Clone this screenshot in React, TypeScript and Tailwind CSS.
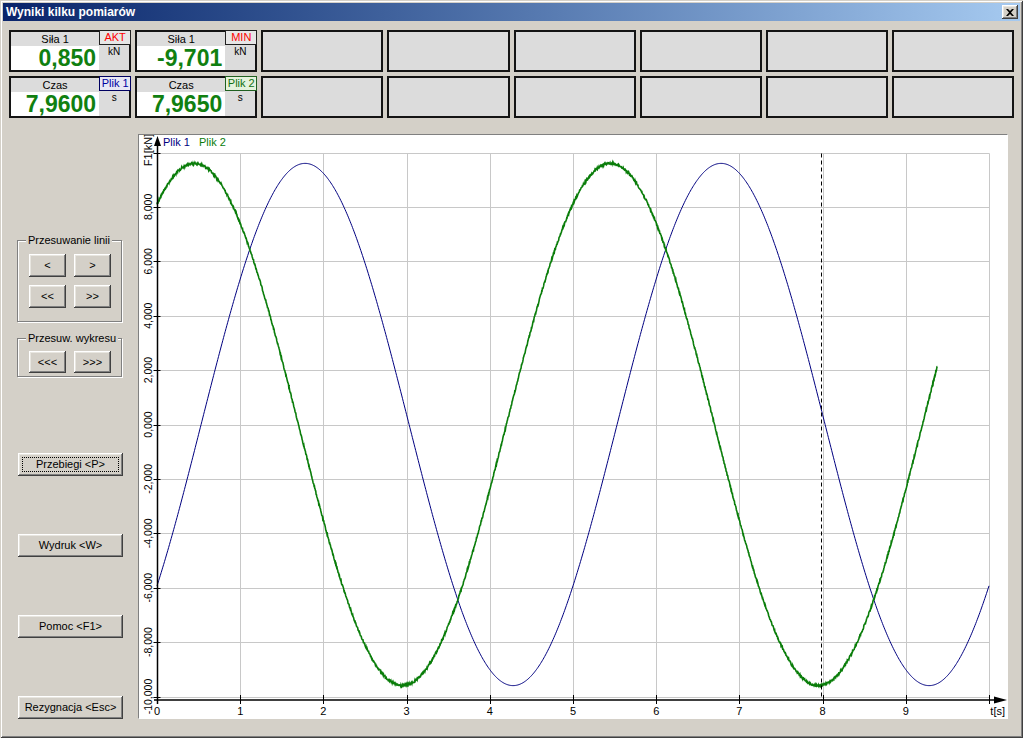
import React from "react";

type Cell = {
    label: string;
    tag: string;
    tagClass: string;
    value: string;
    unit: string;
} | null;

const rows: Cell[][] = [
    [
        { label: "Siła 1", tag: "AKT", tagClass: "text-[#ff0000] bg-[#e6e6e6] border-[#202020]", value: "0,850", unit: "kN" },
        { label: "Siła 1", tag: "MIN", tagClass: "text-[#ff0000] bg-[#e6e6e6] border-[#202020]", value: "-9,701", unit: "kN" },
        null, null, null, null, null, null,
    ],
    [
        { label: "Czas", tag: "Plik 1", tagClass: "text-[#0000a0] bg-[#e8e8f4] border-[#000060]", value: "7,9600", unit: "s" },
        { label: "Czas", tag: "Plik 2", tagClass: "text-[#107010] bg-[#e4f2dc] border-[#206020]", value: "7,9650", unit: "s" },
        null, null, null, null, null, null,
    ],
];

const btn3d =
    "bg-[#d4d0c8] shadow-[inset_-1px_-1px_#404040,inset_1px_1px_#ffffff,inset_-2px_-2px_#808080,inset_2px_2px_#e8e6e0]";

const Btn = ({ children, className = "" }: { children: React.ReactNode; className?: string }) => (
    <button className={`${btn3d} flex items-center justify-center text-[11px] text-black ${className}`}>
        {children}
    </button>
);

// 👉 focused button: dotted focus rect inside
const FocusBtn = ({ children, className = "" }: { children: React.ReactNode; className?: string }) => (
    <button className={`${btn3d} p-[4px] ${className}`}>
        <span className="flex h-full w-full items-center justify-center border border-dotted border-black text-[11px] text-black">
            {children}
        </span>
    </button>
);

const GroupBox = ({ title, className = "", children }: { title: string; className?: string; children: React.ReactNode }) => (
    <div className={`relative border border-[#808080] shadow-[inset_1px_1px_#ffffff,1px_1px_#ffffff] ${className}`}>
        <span className="absolute -top-[8px] left-[8px] bg-[#d4d0c8] px-[2px] text-[11px] leading-[14px] text-black">
            {title}
        </span>
        {children}
    </div>
);

const Panel = ({ cell }: { cell: Cell }) => {
    if (!cell) {
        return <div className="h-[42px] border-2 border-[#141414] bg-[#dcdcdc]" />;
    }
    return (
        <div className="flex h-[42px] border-2 border-[#141414] bg-[#dcdcdc]">
            <div className="flex flex-1 flex-col">
                <div className="flex h-[14px] items-center justify-center text-[11px] leading-none text-black">
                    {cell.label}
                </div>
                <div className="flex flex-1 items-center justify-end bg-white pr-[3px] text-[23px] font-bold leading-none text-[#108010]">
                    {cell.value}
                </div>
            </div>
            <div className="flex w-[30px] flex-col">
                <div className={`flex h-[15px] items-center justify-center border text-[11px] leading-none ${cell.tagClass} -mt-[2px] -mr-[2px] w-[32px]`}>
                    {cell.tag}
                </div>
                <div className="pt-[2px] text-center text-[10px] leading-none text-black">{cell.unit}</div>
            </div>
        </div>
    );
};

// chart geometry (px inside the chart box)
const X = (t: number) => 18 + t * 83.2;
const Y = (v: number) => 289.5 - v * 27.2;
// snapped to pixel centres for crisp 1px lines
const XS = (t: number) => Math.round(X(t)) + 0.5;
const YS = (v: number) => Math.round(Y(v)) + 0.5;

const curve = (phase: number, tEnd: number, noise: number) => {
    let seed = 12345;
    const rnd = () => {
        seed = (seed * 1103515245 + 12345) % 2147483648;
        return seed / 2147483648;
    };
    const pts: string[] = [];
    const step = noise > 0 ? 0.004 : 0.01;
    for (let t = 0; t <= tEnd + 1e-9; t += step) {
        const v = 9.6 * Math.cos((2 * Math.PI * (t - phase)) / 5);
        const n = noise > 0 ? (rnd() - 0.5) * noise : 0;
        pts.push(`${X(t).toFixed(2)},${(Y(v) + n).toFixed(2)}`);
    }
    return "M" + pts.join(" L");
};

const yTicks = [10, 8, 6, 4, 2, 0, -2, -4, -6, -8, -10];
const yLabel = (v: number) =>
    v === 0 ? "0,000" : `${v < 0 ? "-" : ""}${Math.abs(v)},000`;

const Chart = () => {
    const navy = curve(1.78, 10, 0);
    const green = curve(0.45, 9.38, 2.2);
    const ax = XS(0);
    return (
        <div className="h-[585px] w-[870px] border border-t-[#808080] border-l-[#808080] border-r-white border-b-white bg-white">
            <svg width={868} height={583} className="block" style={{ fontFamily: '"Liberation Sans", Arial, sans-serif' }}>
                {/* grid */}
                {[1, 2, 3, 4, 5, 6, 7, 8, 9, 10].map(t => (
                    <line key={"v" + t} x1={XS(t)} x2={XS(t)} y1={YS(10)} y2={YS(-10)} stroke="#c8c8c8" />
                ))}
                {yTicks.map(v => (
                    <line key={"h" + v} x1={ax} x2={XS(10)} y1={YS(v)} y2={YS(v)} stroke="#c8c8c8" />
                ))}

                {/* curves */}
                <path d={navy} fill="none" stroke="#000080" strokeWidth={1} />
                <path d={green} fill="none" stroke="#0a7d0a" strokeWidth={1.6} />

                {/* cursor */}
                <line x1={682.5} x2={682.5} y1={YS(10)} y2={565} stroke="#000" strokeDasharray="4 3" />

                {/* axes */}
                <line x1={ax} x2={ax} y1={8} y2={569} stroke="#000" strokeWidth={1.5} />
                <polygon points={`${ax},1 ${ax - 3.5},11 ${ax + 3.5},11`} fill="#000" />
                <line x1={15} x2={856} y1={565} y2={565} stroke="#000" strokeWidth={1.5} />
                <polygon points="868,565 855,561.5 855,568.5" fill="#000" />
                {yTicks.map(v => (
                    <line key={"yt" + v} x1={ax - 4} x2={ax + 3} y1={YS(v)} y2={YS(v)} stroke="#000" />
                ))}
                {[0, 1, 2, 3, 4, 5, 6, 7, 8, 9, 10].map(t => (
                    <line key={"xt" + t} x1={XS(t)} x2={XS(t)} y1={560} y2={569} stroke="#000" />
                ))}

                {/* labels */}
                {yTicks.filter(v => v !== 10).map(v => (
                    <text
                        key={"yl" + v}
                        x={9}
                        y={Y(v)}
                        fontSize={10.5}
                        textAnchor="middle"
                        dominantBaseline="central"
                        transform={`rotate(-90 9 ${Y(v)})`}
                    >
                        {yLabel(v)}
                    </text>
                ))}
                <text x={9} y={15} fontSize={11} textAnchor="middle" dominantBaseline="central" transform="rotate(-90 9 15)">
                    F1[kN]
                </text>
                {[0, 1, 2, 3, 4, 5, 6, 7, 8, 9].map(t => (
                    <text key={"xl" + t} x={X(t)} y={580} fontSize={11} textAnchor="middle">
                        {t}
                    </text>
                ))}
                <text x={866} y={580} fontSize={11} textAnchor="end">t[s]</text>

                {/* legend */}
                <text x={24} y={11} fontSize={11} fill="#000080">Plik 1</text>
                <text x={60} y={11} fontSize={11} fill="#0a7d0a">Plik 2</text>
            </svg>
        </div>
    );
};

const App = () => {
    return (
        <div
            className="h-[738px] w-[1023px] overflow-hidden bg-[#d4d0c8] shadow-[inset_1px_1px_#d4d0c8,inset_-1px_-1px_#404040,inset_2px_2px_#ffffff,inset_-2px_-2px_#808080]"
            style={{ fontFamily: '"Liberation Sans", Arial, sans-serif' }}
        >
            {/* title bar */}
            <div className="mx-[3px] mt-[3px] flex h-[18px] items-center justify-between bg-gradient-to-r from-[#0a246a] to-[#a6caf0] pl-[3px] pr-[2px]">
                <span className="text-[12px] font-bold leading-none text-white">Wyniki kilku pomiarów</span>
                <button className={`${btn3d} flex h-[14px] w-[16px] items-center justify-center`}>
                    <svg width="8" height="7" viewBox="0 0 8 7">
                        <path d="M0 0 L2 0 L4 2 L6 0 L8 0 L5 3.5 L8 7 L6 7 L4 5 L2 7 L0 7 L3 3.5 Z" fill="#000" />
                    </svg>
                </button>
            </div>

            {/* result panels */}
            <div className="grid grid-cols-8 gap-x-[4px] gap-y-[4px] px-[9px] pt-[9px]">
                {rows.flat().map((cell, i) => (
                    <Panel key={i} cell={cell} />
                ))}
            </div>

            <div className="flex">
                {/* left controls */}
                <div className="flex w-[138px] shrink-0 flex-col">
                    <GroupBox title="Przesuwanie linii" className="ml-[17px] mt-[122px] h-[82px] w-[105px]">
                        <div className="grid grid-cols-[37px_37px] gap-x-[8px] gap-y-[8px] pl-[11px] pt-[13px]">
                            <Btn className="h-[23px]">&lt;</Btn>
                            <Btn className="h-[23px]">&gt;</Btn>
                            <Btn className="h-[23px]">&lt;&lt;</Btn>
                            <Btn className="h-[23px]">&gt;&gt;</Btn>
                        </div>
                    </GroupBox>
                    <GroupBox title="Przesuw. wykresu" className="ml-[17px] mt-[16px] h-[39px] w-[105px]">
                        <div className="grid grid-cols-[37px_37px] gap-x-[8px] pl-[11px] pt-[12px]">
                            <Btn className="h-[22px]">&lt;&lt;&lt;</Btn>
                            <Btn className="h-[22px]">&gt;&gt;&gt;</Btn>
                        </div>
                    </GroupBox>
                    <FocusBtn className="ml-[18px] mt-[76px] h-[23px] w-[105px]">Przebiegi &lt;P&gt;</FocusBtn>
                    <Btn className="ml-[18px] mt-[58px] h-[23px] w-[105px]">Wydruk &lt;W&gt;</Btn>
                    <Btn className="ml-[18px] mt-[58px] h-[23px] w-[105px]">Pomoc &lt;F1&gt;</Btn>
                    <Btn className="ml-[18px] mt-[58px] h-[23px] w-[105px]">Rezygnacja &lt;Esc&gt;</Btn>
                </div>

                {/* chart */}
                <div className="mt-[16px]">
                    <Chart />
                </div>
            </div>
        </div>
    );
};

export default App;
